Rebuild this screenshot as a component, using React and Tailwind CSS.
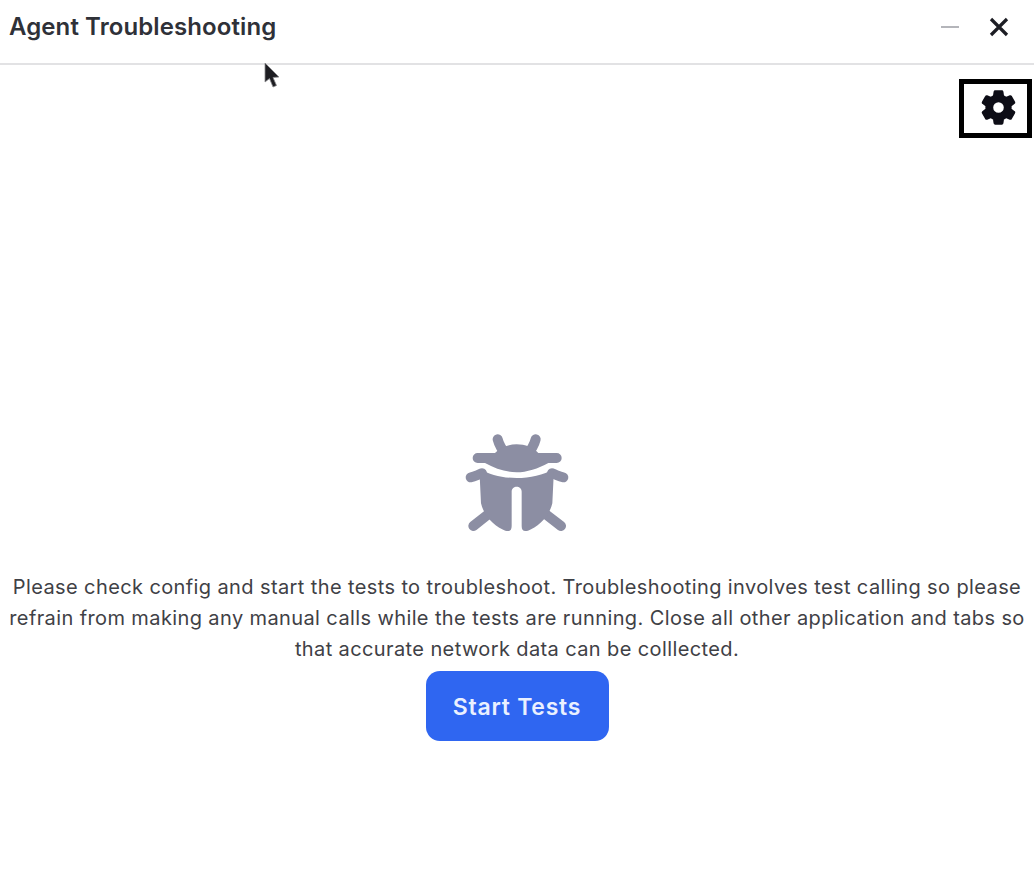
import React from 'react';

const font = { fontFamily: 'Inter, sans-serif' };

function BugIcon() {
  return (
    <svg width="160" height="125" viewBox="0 0 480 375" fill="none">
      <g stroke="#8c8ea3" strokeWidth="30" strokeLinecap="round" strokeLinejoin="round">
        <path d="M173 58 C178 78 188 92 200 104" />
        <path d="M287 58 C282 78 272 92 260 104" />
        <path d="M92 172 C104 170 114 164 126 160" />
        <path d="M370 172 C358 170 348 164 336 160" />
        <path d="M100 318 L148 280" />
        <path d="M363 318 L314 280" />
      </g>
      <g fill="#8c8ea3">
        <path d="M113 99 L165 99 C180 83 205 73 230 73 C255 73 280 83 295 99 L350 99 A15 15 0 0 1 350 129 L325 129 C295 146 260 157 230 157 C200 157 165 146 135 129 L113 129 A15 15 0 0 1 113 99 Z" />
        <path d="M118 146 C150 165 190 174 230 174 C270 174 310 165 342 146 L337 250 C327 292 292 322 264 332 C250 336 245 330 245 318 L245 215 C245 195 215 195 215 215 L215 318 C215 330 210 336 196 332 C168 322 133 292 123 250 Z" />
      </g>
    </svg>
  );
}

function GearIcon() {
  return (
    <svg width="41" height="41" viewBox="0 0 24 24" fill="#0d0d16" stroke="#0d0d16" strokeWidth="1">
      <path d="M19.14 12.94c.04-.3.06-.61.06-.94 0-.32-.02-.64-.07-.94l2.03-1.58a.49.49 0 0 0 .12-.61l-1.92-3.32a.488.488 0 0 0-.59-.22l-2.39.96c-.5-.38-1.03-.7-1.62-.94l-.36-2.54a.484.484 0 0 0-.48-.41h-3.84c-.24 0-.43.17-.47.41l-.36 2.54c-.59.24-1.13.57-1.62.94l-2.39-.96c-.22-.08-.47 0-.59.22L2.74 8.87c-.12.21-.08.47.12.61l2.03 1.58c-.05.3-.09.63-.09.94s.02.64.07.94l-2.03 1.58a.49.49 0 0 0-.12.61l1.92 3.32c.12.22.37.29.59.22l2.39-.96c.5.38 1.03.7 1.62.94l.36 2.54c.05.24.24.41.48.41h3.84c.24 0 .44-.17.47-.41l.36-2.54c.59-.24 1.13-.56 1.62-.94l2.39.96c.22.08.47 0 .59-.22l1.92-3.32c.12-.22.07-.47-.12-.61l-2.01-1.58zM12 15.6c-1.98 0-3.6-1.62-3.6-3.6s1.62-3.6 3.6-3.6 3.6 1.62 3.6 3.6-1.62 3.6-3.6 3.6z" />
    </svg>
  );
}

export default function App() {
  return (
    <div className="relative flex h-[888px] w-[1034px] flex-col overflow-hidden bg-white" style={font}>
      <header className="flex h-[65px] shrink-0 items-center justify-between border-b-2 border-[#e2e2e4] pb-[9px] pl-[9px] pr-[25px]">
        <h1 className="text-[24px] font-semibold tracking-[0.1px] text-[#2f3138]">Agent Troubleshooting</h1>
        <div className="flex items-center gap-[30px]">
          <span className="h-[2px] w-[18px] bg-[#b4b5ba]" />
          <svg width="20" height="20" viewBox="0 0 20 20" fill="none" stroke="#1c1d24" strokeWidth="3.2">
            <path d="M2 2 L18 18 M18 2 L2 18" />
          </svg>
        </div>
      </header>

      <div className="flex justify-end pr-[2px] pt-[14px]">
        <button className="flex h-[59px] w-[73px] items-center justify-center border-[5px] border-black bg-white pb-[2px] pl-[6px]">
          <GearIcon />
        </button>
      </div>

      <main className="flex flex-col items-center pt-[282px]">
        <div className="ml-[6px] flex">
          <BugIcon />
        </div>
        <p className="mt-[27px] w-[1034px] px-[4px] text-center text-[20px] leading-[31px] tracking-[0.39px] text-[#3f4146]">
          Please check config and start the tests to troubleshoot. Troubleshooting involves test calling so please refrain from making any manual calls while the tests are running. Close all other application and tabs so that accurate network data can be colllected.
        </p>
        <button className="mt-[6px] h-[70px] w-[183px] rounded-[14px] bg-[#2f66f1] pt-[2px] text-[23px] font-semibold tracking-[0.75px] text-[#eaf0ff]">
          Start Tests
        </button>
      </main>

      <svg className="absolute left-[263px] top-[62px]" width="18" height="29" viewBox="0 0 18 29">
        <path d="M2 1 L2 20 L6.5 16.5 L10 25 L13.5 23.5 L10 15.5 L16 15 Z" fill="#1d1d22" stroke="#8a8a8e" strokeWidth="0.8" />
      </svg>
    </div>
  );
}
